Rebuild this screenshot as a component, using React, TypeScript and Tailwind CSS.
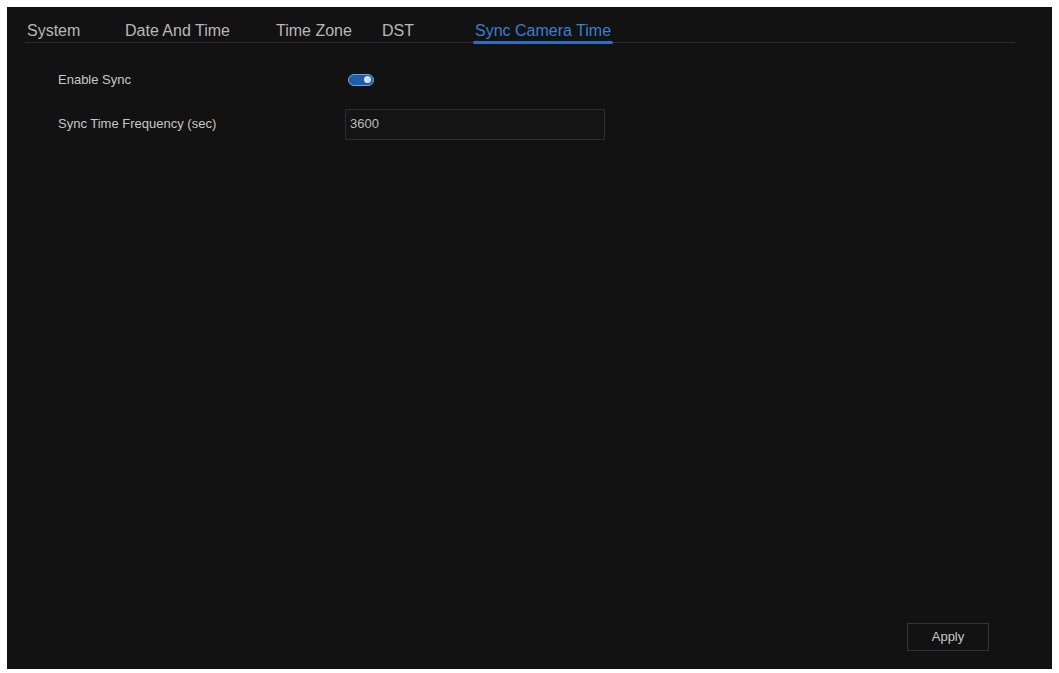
export default function App() {
  return (
    <div className="w-[1059px] h-[673px] bg-white pt-[7px] px-[7px] pb-[4px]" style={{ fontFamily: '"Liberation Sans", Arial, sans-serif' }}>
      <div className="w-full h-full bg-[#121212] flex flex-col pl-[18px] pr-[37px] pt-[12px] pb-[18px]">
        <div className="flex border-b border-[#2a2a2a] h-[24px] text-[16px] text-[#b8b8b8]">
          <div className="w-[100px] pl-[2px]">System</div>
          <div className="w-[151px]">Date And Time</div>
          <div className="w-[106px]">Time Zone</div>
          <div className="w-[91px]">DST</div>
          <div className="relative text-[#3a7fd0] px-[2px]">Sync Camera Time
            <div className="absolute left-0 right-0 bottom-[-2px] h-[3px] bg-[#2a6fc0] rounded"></div>
          </div>
        </div>
        <div className="flex items-center mt-[27px] text-[13px] text-[#c8c8c8]">
          <div className="pl-[33px] w-[323px]">Enable Sync</div>
          <div className="w-[26px] h-[12px] rounded-full bg-[#1f5fa8] border border-[#6fa3dc] flex items-center justify-end pr-[2px]">
            <div className="w-[7px] h-[7px] rounded-full bg-[#cfe2f7]"></div>
          </div>
        </div>
        <div className="flex items-center mt-[19px] text-[13px] text-[#c8c8c8]">
          <div className="pl-[33px] w-[320px]">Sync Time Frequency (sec)</div>
          <div className="w-[260px] h-[31px] border border-[#2e2e2e] bg-[#141414] flex items-center px-[4px] text-[#bdbdbd]">3600</div>
        </div>
        <div className="flex-1"></div>
        <div className="flex justify-end pr-[26px]">
          <div className="w-[82px] h-[28px] border border-[#333] flex items-center justify-center text-[13px] text-[#c8c8c8]">Apply</div>
        </div>
      </div>
    </div>
  );
}
